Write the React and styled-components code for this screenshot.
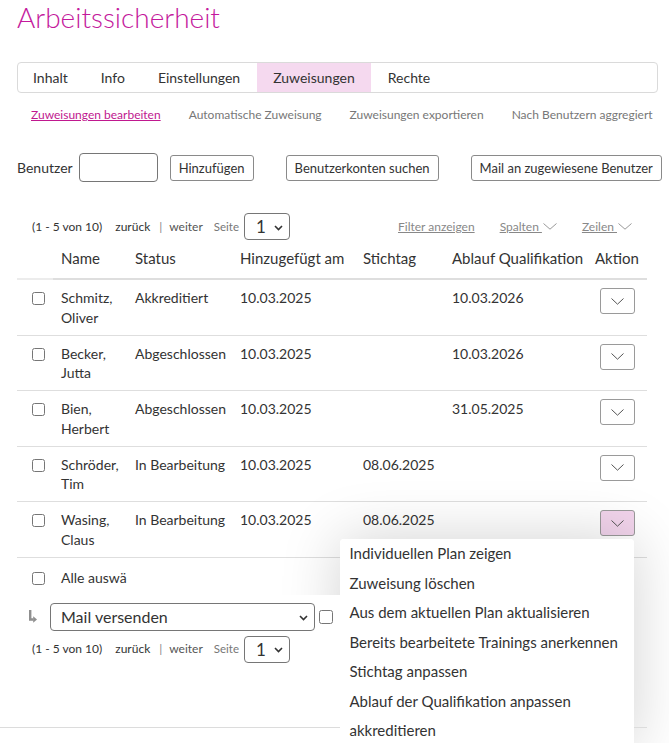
import React from 'react';
import styled, { createGlobalStyle } from 'styled-components';

const GlobalStyle = createGlobalStyle`
  body {
    margin: 0;
    background: #fff;
    font-family: Lato, "Liberation Sans", sans-serif;
    color: #333;
  }
`;

const Page = styled.div`
  padding: 0 11px 0 17px;
`;

const Title = styled.h1`
  margin: 0;
  font-size: 28px;
  line-height: 34px;
  font-weight: 300;
  color: #c4199c;
`;

const TabBar = styled.div`
  margin-top: 28px;
  display: flex;
  height: 31px;
  box-sizing: border-box;
  border: 1px solid #dadada;
  border-radius: 4px;
`;

const Tab = styled.div`
  padding: 0 16.5px;
  line-height: 29px;
  font-size: 14px;
  color: #333;
  background: ${p => (p.$active ? '#f5d9ef' : 'transparent')};
  &:first-child {
    padding-left: 15px;
  }
`;

const SubNav = styled.div`
  margin-top: 12px;
  padding-left: 14px;
  display: flex;
  gap: 28px;
  font-size: 12px;
  line-height: 20px;
`;

const SubLink = styled.span`
  color: ${p => (p.$active ? '#c0188f' : '#777')};
  text-decoration: ${p => (p.$active ? 'underline' : 'none')};
`;

const Toolbar = styled.div`
  margin-top: 28px;
  display: flex;
  align-items: center;
  gap: 16px;
`;

const FieldGroup = styled.div`
  display: flex;
  align-items: center;
`;

const Label = styled.span`
  font-size: 14px;
  margin-right: 6px;
`;

const TextInput = styled.input`
  width: 79px;
  height: 29px;
  box-sizing: border-box;
  border: 1px solid #767676;
  border-radius: 4px;
  margin: 0 12px 0 0;
`;

const Button = styled.button`
  height: 26px;
  padding: 0 8px;
  font-family: inherit;
  font-size: 13px;
  color: #333;
  background: #fff;
  border: 1px solid #8a8a8a;
  border-radius: 3px;
  white-space: nowrap;
`;

const Separator = styled.div`
  width: 1px;
  align-self: stretch;
  margin-top: -10px;
  background: #e0e0e0;
`;

const Pager = styled.div`
  margin-top: ${p => p.$top || 0}px;
  width: 600px;
  padding-left: 15px;
  display: flex;
  align-items: center;
  font-size: 12px;
  line-height: 16px;
`;

const Count = styled.span`
  color: #333;
  margin-right: 13px;
`;

const PageLink = styled.span`
  color: ${p => (p.$muted ? '#555' : '#333')};
`;

const Pipe = styled.span`
  color: #888;
  margin: 0 7px 0 9px;
`;

const PageLabel = styled.span`
  color: #777;
  font-size: 11.5px;
  margin: 0 5px 0 11px;
`;

const SelectWrap = styled.div`
  position: relative;
  display: inline-flex;
`;

const Select = styled.select`
  appearance: none;
  width: ${p => p.$width}px;
  height: ${p => p.$height}px;
  box-sizing: border-box;
  padding: 0 0 0 ${p => p.$pad}px;
  font-family: inherit;
  font-size: ${p => p.$size}px;
  color: #333;
  background: #fff;
  border: 1px solid #767676;
  border-radius: 4px;
  margin: 0;
`;

const SelectArrow = styled.svg`
  position: absolute;
  right: 7px;
  top: 50%;
  margin-top: -2px;
  pointer-events: none;
`;

const Tools = styled.div`
  margin-left: auto;
  display: flex;
  align-items: center;
  gap: 25px;
`;

const ToolLink = styled.span`
  display: inline-flex;
  align-items: center;
  color: #888;
  span {
    text-decoration: underline;
    white-space: pre;
  }
  svg {
    margin-left: 1px;
  }
`;

const Table = styled.table`
  width: 630px;
  border-collapse: collapse;
  table-layout: fixed;
  font-size: 14px;
`;

const Th = styled.th`
  text-align: left;
  font-weight: 400;
  font-size: 15px;
  line-height: 20px;
  padding: 8px 8px 10px;
  white-space: nowrap;
  border-bottom: 2px solid ${p => (p.$light ? '#ececec' : '#dedede')};
`;

const Td = styled.td`
  padding: 8px 8px 7.5px;
  line-height: 19.5px;
  vertical-align: top;
  border-bottom: 1px solid #dedede;
  white-space: ${p => (p.$wrap ? 'normal' : 'nowrap')};
`;

const CheckCell = styled(Td)`
  padding-left: 15px;
`;

const FootCell = styled.td`
  padding: 10px 8px 5px ${p => (p.$check ? 15 : 8)}px;
  line-height: 20px;
  vertical-align: top;
`;

const Check = styled.input`
  margin: 4px 0 0;
  width: 13px;
  height: 13px;
`;

const ActionCell = styled(Td)`
  text-align: center;
`;

const ActionWrap = styled.div`
  position: relative;
  display: inline-block;
`;

const ActionButton = styled.button`
  width: 35px;
  height: 26px;
  display: flex;
  align-items: center;
  justify-content: center;
  padding: 0;
  border: 1px solid #9a9a9a;
  border-radius: 3px;
  background: ${p => (p.$open ? '#f2d4ec' : '#fff')};
`;

const MenuShadow = styled.div`
  position: absolute;
  top: calc(100% + 3px);
  right: 1px;
  width: 294px;
  height: 210px;
  z-index: 1;
  border-radius: 4px;
  box-shadow: 0 0 60px rgba(0, 0, 0, 0.18);
`;

const Menu = styled.ul`
  position: absolute;
  top: calc(100% + 3px);
  right: 1px;
  width: 294px;
  z-index: 3;
  margin: 0;
  padding: 0;
  list-style: none;
  background: #fff;
  border-radius: 4px;
  text-align: left;
`;

const MenuItem = styled.li`
  padding: 0 10px;
  font-size: 15px;
  line-height: 29.5px;
  color: #333;
  white-space: nowrap;
`;

const LowerArea = styled.div`
  position: relative;
  z-index: 2;
  width: 634px;
  margin-left: -17px;
  padding: 8px 0 17px 17px;
  box-sizing: border-box;
  background: #fff;
`;

const BulkRow = styled.div`
  display: flex;
  align-items: center;
  padding-left: 12px;
`;

const BulkIcon = styled.svg`
  margin-right: 13px;
`;

const BulkCheck = styled.input`
  margin: 0 0 0 4px;
  width: 14px;
  height: 14px;
`;

const FooterLine = styled.div`
  margin: 64px 0 0 -17px;
  width: 647px;
  border-top: 1px solid #dcdcdc;
`;

const Chevron = ({ w = 12, h = 7, color = '#555', stroke = 1 }) => (
  <svg width={w} height={h} viewBox={`0 0 ${w} ${h}`}>
    <path d={`M0.5 0.5 L${w / 2} ${h - 0.8} L${w - 0.5} 0.5`} fill="none" stroke={color} strokeWidth={stroke} />
  </svg>
);

const DropSelect = ({ value, width, height, size, pad }) => (
  <SelectWrap>
    <Select $width={width} $height={height} $size={size} $pad={pad} defaultValue={value}>
      <option>{value}</option>
    </Select>
    <SelectArrow width="9" height="6" viewBox="0 0 9 6">
      <path d="M1 1 L4.5 4.5 L8 1" fill="none" stroke="#333" strokeWidth="1.6" />
    </SelectArrow>
  </SelectWrap>
);

const PagerContent = () => (
  <>
    <Count>(1 - 5 von 10)</Count>
    <PageLink>zurück</PageLink>
    <Pipe>|</Pipe>
    <PageLink $muted>weiter</PageLink>
    <PageLabel>Seite</PageLabel>
    <DropSelect value="1" width={46} height={27} size={17} pad={11} />
  </>
);

const rows = [
  { first: 'Schmitz,', last: 'Oliver', status: 'Akkreditiert', added: '10.03.2025', due: '', expiry: '10.03.2026' },
  { first: 'Becker,', last: 'Jutta', status: 'Abgeschlossen', added: '10.03.2025', due: '', expiry: '10.03.2026' },
  { first: 'Bien,', last: 'Herbert', status: 'Abgeschlossen', added: '10.03.2025', due: '', expiry: '31.05.2025' },
  { first: 'Schröder,', last: 'Tim', status: 'In Bearbeitung', added: '10.03.2025', due: '08.06.2025', expiry: '' },
  { first: 'Wasing,', last: 'Claus', status: 'In Bearbeitung', added: '10.03.2025', due: '08.06.2025', expiry: '', open: true },
];

const menuItems = [
  'Individuellen Plan zeigen',
  'Zuweisung löschen',
  'Aus dem aktuellen Plan aktualisieren',
  'Bereits bearbeitete Trainings anerkennen',
  'Stichtag anpassen',
  'Ablauf der Qualifikation anpassen',
  'akkreditieren',
];

export default function App() {
  return (
    <Page>
      <GlobalStyle />
      <Title>Arbeitssicherheit</Title>

      <TabBar>
        <Tab>Inhalt</Tab>
        <Tab>Info</Tab>
        <Tab>Einstellungen</Tab>
        <Tab $active>Zuweisungen</Tab>
        <Tab>Rechte</Tab>
      </TabBar>

      <SubNav>
        <SubLink $active>Zuweisungen bearbeiten</SubLink>
        <SubLink>Automatische Zuweisung</SubLink>
        <SubLink>Zuweisungen exportieren</SubLink>
        <SubLink>Nach Benutzern aggregiert</SubLink>
      </SubNav>

      <Toolbar>
        <FieldGroup>
          <Label>Benutzer</Label>
          <TextInput type="text" />
          <Button>Hinzufügen</Button>
        </FieldGroup>
        <Separator />
        <Button>Benutzerkonten suchen</Button>
        <Separator />
        <Button>Mail an zugewiesene Benutzer</Button>
      </Toolbar>

      <Pager $top={31}>
        <PagerContent />
        <Tools>
          <ToolLink><span>Filter anzeigen</span></ToolLink>
          <ToolLink><span>Spalten </span><Chevron w={14} h={7} color="#999" /></ToolLink>
          <ToolLink><span>Zeilen </span><Chevron w={14} h={7} color="#999" /></ToolLink>
        </Tools>
      </Pager>

      <Table>
        <colgroup>
          <col style={{ width: 36 }} />
          <col style={{ width: 74 }} />
          <col style={{ width: 105 }} />
          <col style={{ width: 123 }} />
          <col style={{ width: 89 }} />
          <col style={{ width: 143 }} />
          <col style={{ width: 60 }} />
        </colgroup>
        <thead>
          <tr>
            <Th $light />
            <Th>Name</Th>
            <Th>Status</Th>
            <Th>Hinzugefügt am</Th>
            <Th>Stichtag</Th>
            <Th>Ablauf Qualifikation</Th>
            <Th>Aktion</Th>
          </tr>
        </thead>
        <tbody>
          {rows.map(r => (
            <tr key={r.first}>
              <CheckCell><Check type="checkbox" /></CheckCell>
              <Td $wrap>{r.first}<br />{r.last}</Td>
              <Td>{r.status}</Td>
              <Td>{r.added}</Td>
              <Td>{r.due}</Td>
              <Td>{r.expiry}</Td>
              <ActionCell>
                <ActionWrap>
                  <ActionButton $open={r.open}>
                    <Chevron w={13} h={7} color="#555" />
                  </ActionButton>
                  {r.open && (
                    <>
                      <MenuShadow />
                      <Menu>
                        {menuItems.map(m => (
                          <MenuItem key={m}>{m}</MenuItem>
                        ))}
                      </Menu>
                    </>
                  )}
                </ActionWrap>
              </ActionCell>
            </tr>
          ))}
        </tbody>
        <tfoot>
          <tr>
            <FootCell $check><Check type="checkbox" /></FootCell>
            <FootCell colSpan={6}>Alle auswä</FootCell>
          </tr>
        </tfoot>
      </Table>

      <LowerArea>
        <BulkRow>
          <BulkIcon width="8" height="13" viewBox="0 0 8 13">
            <path d="M1.2 0 V9.5 H4.5" fill="none" stroke="#8f8f8f" strokeWidth="2.4" />
            <path d="M4.2 6.3 L8 9.5 L4.2 12.7 Z" fill="#8f8f8f" />
          </BulkIcon>
          <DropSelect value="Mail versenden" width={265} height={28} size={16} pad={10} />
          <BulkCheck type="checkbox" />
        </BulkRow>
        <Pager $top={5}>
          <PagerContent />
        </Pager>
        <FooterLine />
      </LowerArea>
    </Page>
  );
}
